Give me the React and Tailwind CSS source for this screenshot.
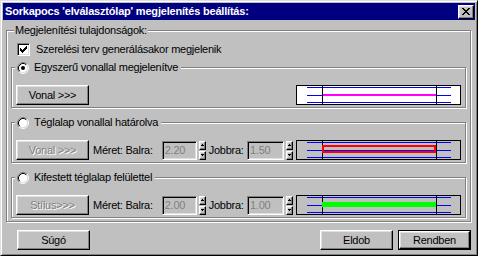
import React from "react";

const raised =
  "border border-t-white border-l-white border-r-black border-b-black shadow-[inset_-1px_-1px_0_#808080,inset_1px_1px_0_#dfdfdf]";
const sunken =
  "border border-t-[#808080] border-l-[#808080] border-r-white border-b-white shadow-[inset_1px_1px_0_#000,inset_-1px_-1px_0_#dfdfdf]";
const etched = "border border-[#808080] shadow-[inset_1px_1px_0_#fff,1px_1px_0_#fff]";
const disabledText = "text-[#808080] [text-shadow:1px_1px_0_#fff]";

function Px({ rows, color = "#000" }) {
  const w = rows[0].length;
  const h = rows.length;
  let d = "";
  rows.forEach((r, y) =>
    [...r].forEach((c, x) => {
      if (c === "#") d += `M${x} ${y}h1v1h-1z`;
    })
  );
  return (
    <svg width={w} height={h} viewBox={`0 0 ${w} ${h}`} shapeRendering="crispEdges">
      <path d={d} fill={color} />
    </svg>
  );
}

const CLOSE_X = ["##....##", ".##..##.", "..####..", "...##...", "..####..", ".##..##.", "##....##"];
const CHECK = ["......#", ".....##", "#...###", "##.###.", "#####..", ".###...", "..#...."];
const UP = [".#.", "###"];
const DOWN = ["###", ".#."];

function Radio({ checked }) {
  return (
    <svg width="12" height="12" viewBox="0 0 12 12" className="shrink-0">
      <circle cx="6" cy="6" r="4.5" fill="#fff" />
      <path d="M2.11 9.89 A5.5 5.5 0 0 1 9.89 2.11" fill="none" stroke="#808080" />
      <path d="M9.89 2.11 A5.5 5.5 0 0 1 2.11 9.89" fill="none" stroke="#fff" />
      <path d="M2.82 9.18 A4.5 4.5 0 0 1 9.18 2.82" fill="none" stroke="#000" />
      <path d="M9.18 2.82 A4.5 4.5 0 0 1 2.82 9.18" fill="none" stroke="#dfdfdf" />
      {checked && <circle cx="6" cy="6" r="2" fill="#000" />}
    </svg>
  );
}

function Checkbox() {
  return (
    <div className={`w-[13px] h-[13px] bg-white ${sunken} flex items-center justify-center shrink-0`}>
      <Px rows={CHECK} />
    </div>
  );
}

function Preview({ kind, bg }) {
  return (
    <svg width="165" height="20" viewBox="0 0 165 20" shapeRendering="crispEdges" className="shrink-0">
      <rect x="0.5" y="0.5" width="164" height="19" fill={bg} stroke="#000" />
      {[2, 10, 17].map((y) => (
        <rect key={y} x="11" y={y} width="144" height="1" fill="#0000ff" />
      ))}
      <rect x="26" y="0" width="1" height="20" fill="#000" />
      <rect x="140" y="0" width="1" height="20" fill="#000" />
      {kind === "line" && <rect x="27" y="9" width="113" height="2" fill="#ff00ff" />}
      {kind === "rect" && (
        <rect x="27" y="6" width="112" height="6" fill="none" stroke="#ff0000" strokeWidth="2" />
      )}
      {kind === "fill" && <rect x="26" y="7" width="114" height="5" fill="#00ff00" />}
    </svg>
  );
}

function Button({ children, disabled, className = "" }) {
  return (
    <div
      className={`w-[73px] h-[20px] bg-[#c0c0c0] ${raised} flex items-center justify-center shrink-0 ${
        disabled ? disabledText : "text-black"
      } ${className}`}
    >
      {children}
    </div>
  );
}

function Spin() {
  return (
    <div className="flex flex-col gap-[1px] w-[7px] h-[19px] shrink-0">
      <div className={`h-[9px] bg-[#c0c0c0] ${raised} flex items-center justify-center`}>
        <Px rows={UP} />
      </div>
      <div className={`h-[9px] bg-[#c0c0c0] ${raised} flex items-center justify-center`}>
        <Px rows={DOWN} />
      </div>
    </div>
  );
}

function Field({ value, w }) {
  return (
    <div className={`${w} h-[19px] bg-[#c0c0c0] ${sunken} flex items-center pl-[2px] text-[#808080] shrink-0`}>
      {value}
    </div>
  );
}

function Group({ label, checked, className = "", children }) {
  return (
    <div className={`relative w-[455px] h-[41px] ${etched} ${className}`}>
      <div className="absolute left-[3px] top-[-7px] h-[13px] flex items-center gap-[5px] pl-[2px] pr-[3px] bg-[#c0c0c0]">
        <Radio checked={checked} />
        <span className="leading-[13px] whitespace-nowrap">{label}</span>
      </div>
      <div className="flex items-center pt-[15px] pl-[4px] pr-[4px] h-full box-border">{children}</div>
    </div>
  );
}

function SizeRow({ btn, left, right, kind }) {
  return (
    <>
      <Button disabled>{btn}</Button>
      <span className="ml-[4px] w-[70px] whitespace-nowrap">Méret: Balra:</span>
      <Field value={left} w="w-[35px]" />
      <div className="ml-[2px]">
        <Spin />
      </div>
      <span className="ml-[3px] w-[39px] whitespace-nowrap">Jobbra:</span>
      <Field value={right} w="w-[37px]" />
      <div className="ml-[2px]">
        <Spin />
      </div>
      <div className="ml-[3px]">
        <Preview kind={kind} bg="#c0c0c0" />
      </div>
    </>
  );
}

export default function App() {
  return (
    <div
      className={`w-[478px] h-[256px] bg-[#c0c0c0] border border-t-[#dfdfdf] border-l-[#dfdfdf] border-r-black border-b-black shadow-[inset_1px_1px_0_#fff,inset_-1px_-1px_0_#808080] p-[2px] flex flex-col font-['Liberation_Sans','Arial',sans-serif] text-[11px] tracking-[-0.25px] text-black overflow-hidden`}
    >
      {/* Title bar */}
      <div className="h-[17px] bg-[#000080] flex items-center pl-[2px] shrink-0">
        <span className="text-white font-bold whitespace-nowrap tracking-[-0.2px]">
          Sorkapocs 'elválasztólap' megjelenítés beállítás:
        </span>
        <div className={`ml-auto mr-[1px] w-[16px] h-[14px] bg-[#c0c0c0] ${raised} flex items-center justify-center`}>
          <Px rows={CLOSE_X} />
        </div>
      </div>

      {/* Outer group */}
      <div className={`relative ml-[3px] mt-[10px] w-[465px] h-[192px] shrink-0 ${etched} flex flex-col`}>
        <div className="absolute left-[7px] top-[-7px] h-[13px] px-[1px] bg-[#c0c0c0] leading-[13px] whitespace-nowrap">
          Megjelenítési tulajdonságok:
        </div>

        <div className="flex items-center gap-[6px] ml-[10px] mt-[12px] h-[13px]">
          <Checkbox />
          <span className="leading-[13px] whitespace-nowrap">Szerelési terv generálásakor megjelenik</span>
        </div>

        <Group label="Egyszerű vonallal megjelenítve" checked className="ml-[4px] mt-[11px]">
          <Button>Vonal &gt;&gt;&gt;</Button>
          <div className="ml-auto">
            <Preview kind="line" bg="#ffffff" />
          </div>
        </Group>

        <Group label="Téglalap vonallal határolva" className="ml-[4px] mt-[14px]">
          <SizeRow btn={<>Vonal &gt;&gt;&gt;</>} left="2.20" right="1.50" kind="rect" />
        </Group>

        <Group label="Kifestett téglalap felülettel" className="ml-[4px] mt-[14px]">
          <SizeRow btn={<>Stílus&gt;&gt;&gt;</>} left="2.00" right="1.00" kind="fill" />
        </Group>
      </div>

      {/* Bottom buttons */}
      <div className="flex items-center mt-[8px] h-[20px] pl-[14px] pr-[4px] shrink-0">
        <Button>Súgó</Button>
        <Button className="ml-auto">Eldob</Button>
        <div className="ml-[5px] w-[73px] h-[20px] border border-black flex">
          <div className={`flex-1 bg-[#c0c0c0] ${raised} flex items-center justify-center`}>Rendben</div>
        </div>
      </div>
    </div>
  );
}
